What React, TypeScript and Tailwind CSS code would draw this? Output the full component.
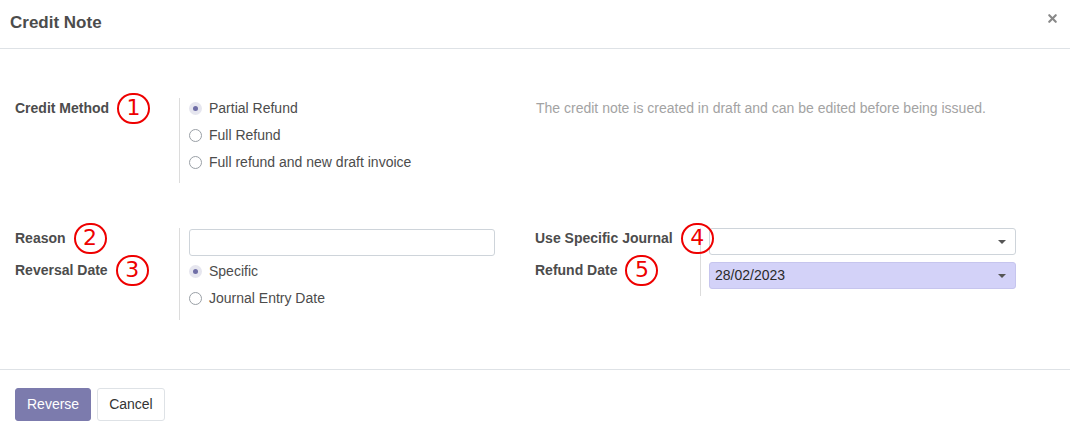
import { X } from 'lucide-react'

// Odoo "Credit Note" wizard, with red numbered callouts beside each field label.

const font = { fontFamily: '"Liberation Sans", Arial, sans-serif' }

function Callout({ n }: { n: number }) {
  return (
    <span
      className="relative z-10 ml-2 -my-[6px] inline-flex h-[31px] w-[33px] shrink-0 items-center justify-center rounded-full border-[2.5px] border-[#ee0000] text-[22px] font-normal leading-none text-[#ee0000]"
      style={{ fontFamily: '"DejaVu Sans", sans-serif' }}
    >
      {n}
    </span>
  )
}

function Radio({ label, checked }: { label: string; checked?: boolean }) {
  return (
    <div className="flex h-[20px] items-center gap-[7px]">
      {checked ? (
        <span className="flex h-[13px] w-[13px] items-center justify-center rounded-full bg-[#e6e6ef]">
          <span className="h-[5px] w-[5px] rounded-full bg-[#6f6ea6]" />
        </span>
      ) : (
        <span className="h-[13px] w-[13px] rounded-full border border-[#9aa0a6] bg-white" />
      )}
      <span className="text-[14px] text-[#4c4c4c]">{label}</span>
    </div>
  )
}

function Label({ text, n, className = '' }: { text: string; n: number; className?: string }) {
  return (
    <div className={`flex h-[20px] items-center whitespace-nowrap text-[14px] font-bold text-[#4c4c4c] ${className}`}>
      {text}
      <Callout n={n} />
    </div>
  )
}

function Caret() {
  return <span className="h-0 w-0 border-x-[4px] border-t-[4px] border-x-transparent border-t-[#555]" />
}

export default function App() {
  return (
    <div className="h-[439px] w-[1070px] bg-white" style={font}>
      <header className="flex h-[49px] items-start justify-between border-b border-[#dee2e6] pl-[10px] pr-[11px]">
        <h1 className="mt-[10px] text-[17px] font-bold text-[#4c4c4c]">Credit Note</h1>
        <X className="mt-[12px] size-[13px] text-[#888]" strokeWidth={4} />
      </header>

      <main className="px-[15px] pb-[49px] pt-[49px]">
        {/* credit method */}
        <div className="grid grid-cols-[520px_1fr]">
          <div className="flex">
            <div className="w-[164px]">
              <Label text="Credit Method" n={1} />
            </div>
            <div className="flex flex-col gap-[7px] border-l border-[#dcdcdc] pb-[11px] pl-[9px]">
              <Radio label="Partial Refund" checked />
              <Radio label="Full Refund" />
              <Radio label="Full refund and new draft invoice" />
            </div>
          </div>
          <p className="flex h-[20px] items-center pl-px text-[14px] text-[#a3a3a3]">
            The credit note is created in draft and can be edited before being issued.
          </p>
        </div>

        {/* reason / dates */}
        <div className="mt-[45px] grid grid-cols-[520px_1fr]">
          <div className="flex">
            <div className="flex w-[164px] flex-col">
              <Label text="Reason" n={2} className="mb-[12px]" />
              <Label text="Reversal Date" n={3} />
            </div>
            <div className="flex flex-col border-l border-[#dcdcdc] pb-[12px] pl-[9px] pt-px">
              <input className="h-[27px] w-[306px] rounded-[3px] border border-[#ced4da] bg-white" />
              <div className="mt-[5px] flex flex-col gap-[7px]">
                <Radio label="Specific" checked />
                <Radio label="Journal Entry Date" />
              </div>
            </div>
          </div>

          <div className="flex self-start">
            <div className="flex w-[165px] shrink-0 flex-col">
              <Label text="Use Specific Journal" n={4} className="mb-[12px]" />
              <Label text="Refund Date" n={5} />
            </div>
            <div className="flex flex-col gap-[7px] border-l border-[#dcdcdc] pb-[7px] pl-[8px]">
              <div className="flex h-[27px] w-[307px] items-center justify-end rounded-[3px] border border-[#ced4da] bg-white pr-[9px]">
                <Caret />
              </div>
              <div className="flex h-[27px] w-[307px] items-center justify-between rounded-[3px] border border-[#c6c5ee] bg-[#d3d2f8] pl-[5px] pr-[9px]">
                <span className="text-[14px] text-[#2a2a2a]">28/02/2023</span>
                <Caret />
              </div>
            </div>
          </div>
        </div>
      </main>

      <footer className="flex gap-[6px] border-t border-[#dee2e6] px-[15px] pt-[18px]">
        <button className="h-[33px] rounded-[3px] border border-[#7c7bad] bg-[#7c7bad] px-[11px] text-[14px] text-white">
          Reverse
        </button>
        <button className="h-[33px] rounded-[3px] border border-[#dee2e6] bg-white px-[11px] text-[14px] text-[#333]">
          Cancel
        </button>
      </footer>
    </div>
  )
}
